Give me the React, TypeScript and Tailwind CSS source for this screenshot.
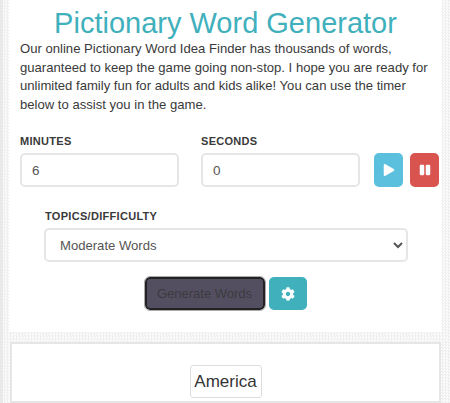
import React from 'react';
import { FaCog, FaPause, FaPlay } from 'react-icons/fa';

const fieldClass =
  'h-[34px] w-[159px] rounded-[5px] border-2 border-[#e6e6e6] bg-white px-[10px] text-[13.5px] text-[#555] outline-none';

const labelClass = 'mb-[5px] block text-[11px] leading-[14px] font-bold tracking-[0.3px] text-[#3a3a3a]';

export default function App() {
  return (
    <div className="h-[403px] overflow-hidden border-l-[3px] border-[#e9e9e9] bg-[repeating-conic-gradient(#efefef_0_25%,#fcfcfc_0_50%)] bg-[length:3px_3px] pl-[6px] pr-[8px] font-['Liberation_Sans',Arial,sans-serif] text-[#333]">
      <div className="h-[332px] bg-white pl-[11px]">
        <h1 className="pr-[11px] pt-[6px] text-center text-[29px] leading-[34px] font-normal text-[#3fb0bc]">
          Pictionary Word Generator
        </h1>
        <p className="w-[415px] text-[13.1px] leading-[18.6px] text-[#3a3a3a]">
          Our online Pictionary Word Idea Finder has thousands of words, guaranteed to keep the game going non-stop. I hope you are ready for unlimited family fun for adults and kids alike! You can use the timer below to assist you in the game.
        </p>

        <div className="mt-[20px] flex items-end">
          <div>
            <label className={labelClass}>MINUTES</label>
            <input className={fieldClass} defaultValue="6" readOnly />
          </div>
          <div className="ml-[22px]">
            <label className={labelClass}>SECONDS</label>
            <input className={fieldClass} defaultValue="0" readOnly />
          </div>
          <button className="ml-[14px] flex h-[34px] w-[29px] items-center justify-center rounded-[5px] bg-[#5bc0de] text-white">
            <FaPlay className="h-[12px] w-[12px]" />
          </button>
          <button className="ml-[7px] flex h-[34px] w-[29px] items-center justify-center rounded-[5px] bg-[#d9534f] text-white">
            <FaPause className="h-[12px] w-[12px]" />
          </button>
        </div>

        <div className="ml-[24px] mt-[22px] w-[364px]">
          <label className={`${labelClass} pl-[1px]`}>TOPICS/DIFFICULTY</label>
          <select className="h-[34px] w-full rounded-[5px] border-2 border-[#e6e6e6] bg-white pl-[10px] text-[13.1px] text-[#555] outline-none">
            <option>Moderate Words</option>
          </select>
        </div>

        <div className="mt-[15px] flex justify-center gap-[4px] pr-[11px]">
          <button className="h-[33px] w-[120px] rounded-[5px] border-2 border-[#222] bg-[#544f60] text-[13px] text-[#3b3b40] outline-1 outline-[#aaa]">
            Generate Words
          </button>
          <button className="flex h-[33px] w-[38px] items-center justify-center rounded-[5px] bg-[#3fb0bc] text-white">
            <FaCog className="h-[14px] w-[14px]" />
          </button>
        </div>
      </div>

      <div className="mx-[1px] mt-[10px] flex h-[61px] justify-center border-2 border-[#e6e6e6] bg-white pt-[21px]">
        <div className="flex h-[33px] w-[72px] items-center justify-center rounded-[3px] border border-[#ddd] text-[17px] text-[#333]">
          America
        </div>
      </div>
    </div>
  );
}
